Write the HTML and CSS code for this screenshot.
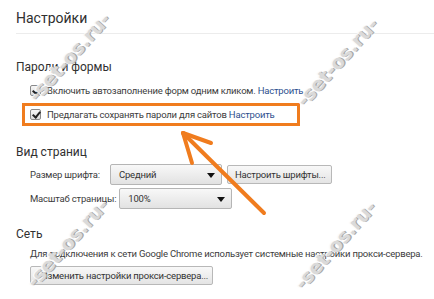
FILE: index.html
```html
<!DOCTYPE html>
<html lang="ru">
<head>
  <meta charset="UTF-8" />
  <title>Настройки</title>
  <link rel="stylesheet" href="styles.css">
</head>
<body>
  <div class="page">
    <header class="page-header">
      <h1>Настройки</h1>
    </header>

    <section class="group">
      <h2>Пароли и формы</h2>
      <label class="check-row">
        <span class="checkbox checked"></span>
        <span>Включить автозаполнение форм одним кликом. <a class="link" href="#">Настроить</a></span>
      </label>
      <label class="check-row highlight">
        <span class="checkbox checked"></span>
        <span>Предлагать сохранять пароли для сайтов <a class="link" href="#">Настроить</a></span>
      </label>
    </section>

    <section class="group">
      <h2>Вид страниц</h2>
      <div class="field-row">
        <span class="field-label label-font">Размер шрифта:</span>
        <div class="select select-font">Средний<span class="caret"></span></div>
        <button class="btn btn-fonts">Настроить шрифты...</button>
      </div>
      <div class="field-row">
        <span class="field-label">Масштаб страницы:</span>
        <div class="select select-zoom">100%<span class="caret"></span></div>
      </div>
    </section>

    <section class="group">
      <h2>Сеть</h2>
      <p class="desc">Для подключения к сети Google Chrome использует системные настройки прокси-сервера.</p>
      <button class="btn btn-proxy">Изменить настройки прокси-сервера...</button>
    </section>
  </div>

  <!-- стрелка поверх скриншота -->
  <svg class="arrow" width="434" height="299" viewBox="0 0 434 299">
    <g stroke="#f07c1e" stroke-width="4" stroke-linecap="round" fill="none">
      <line x1="264" y1="213" x2="183" y2="133" />
      <line x1="183" y1="133" x2="211" y2="143" />
      <line x1="183" y1="133" x2="192" y2="163" />
    </g>
  </svg>

  <div class="watermark wm1">-set-os.ru-</div>
  <div class="watermark wm2">-set-os.ru-</div>
  <div class="watermark wm3">-set-os.ru-</div>
  <div class="watermark wm4">-set-os.ru-</div>
</body>
</html>
```

FILE: styles.css
```css
* {
  box-sizing: border-box;
}

body {
  margin: 0;
  background: #fff;
  font-family: Roboto, "Open Sans", Arial, sans-serif;
  font-size: 9.5px;
  letter-spacing: -0.2px;
  color: #3c3c3c;
  position: relative;
  width: 434px;
  height: 299px;
  overflow: hidden;
}

.page {
  padding: 8px 0 0 16px;
}

.page-header {
  border-bottom: 1px solid #ececec;
  padding-bottom: 5px;
}

.page-header h1 {
  margin: 0;
  font-size: 14px;
  line-height: 20px;
  font-weight: normal;
  letter-spacing: 0;
  color: #303030;
}

.group h2 {
  margin: 0;
  font-size: 12px;
  line-height: 18px;
  font-weight: normal;
  letter-spacing: 0;
  color: #303030;
}

.group:nth-of-type(1) {
  margin-top: 24px;
}

.group:nth-of-type(1) h2 {
  margin-bottom: 5px;
}

.group:nth-of-type(2) {
  margin-top: 17px;
}

.group:nth-of-type(3) {
  margin-top: 16px;
}

.check-row {
  display: flex;
  align-items: center;
  gap: 6px;
  height: 18px;
  margin-left: 14px;
  white-space: nowrap;
}

.check-row.highlight {
  width: fit-content;
  height: 23px;
  margin-top: 4px;
  margin-left: 6px;
  padding: 0 22px 0 5px;
  border: 3px solid #f07c1e;
}

.checkbox {
  width: 11px;
  height: 11px;
  border: 1px solid #8a8a8a;
  border-radius: 2px;
  background: linear-gradient(#f6f6f6, #dcdcdc);
  position: relative;
  flex-shrink: 0;
}

.checkbox.checked::after {
  content: "";
  position: absolute;
  left: 3px;
  top: 0px;
  width: 3px;
  height: 6px;
  border: solid #222;
  border-width: 0 2px 2px 0;
  transform: rotate(40deg);
}

.link {
  color: #2d4f8e;
  text-decoration: none;
}

.field-row {
  display: flex;
  align-items: center;
  gap: 3px;
  margin-left: 14px;
  margin-top: 2px;
  height: 22px;
}

.field-label {
  white-space: nowrap;
}

.label-font {
  min-width: 77px;
}

.select {
  position: relative;
  height: 21px;
  line-height: 19px;
  padding-left: 8px;
  border: 1px solid #b5b5b5;
  border-radius: 2px;
  background: linear-gradient(#f8f8f8, #e2e2e2);
  color: #333;
}

.select-font {
  width: 112px;
}

.select-zoom {
  width: 113px;
}

.caret {
  position: absolute;
  right: 6px;
  top: 8px;
  border-left: 4px solid transparent;
  border-right: 4px solid transparent;
  border-top: 5px solid #111;
}

.btn {
  height: 19px;
  padding: 0 7px;
  font-family: inherit;
  font-size: 9.5px;
  letter-spacing: -0.2px;
  color: #333;
  border: 1px solid #b8b8b8;
  border-radius: 2px;
  background: linear-gradient(#f8f8f8, #e4e4e4);
  white-space: nowrap;
}

.btn-fonts {
  width: 105px;
  margin-left: 2px;
}

.desc {
  margin: 2px 0 0 14px;
  line-height: 18px;
  white-space: nowrap;
}

.btn-proxy {
  margin: 3px 0 0 14px;
  width: 183px;
  text-align: left;
  padding-left: 10px;
}

.arrow {
  position: absolute;
  left: 0;
  top: 0;
}

.watermark {
  position: absolute;
  font-family: "DejaVu Sans", sans-serif;
  font-weight: bold;
  font-size: 19px;
  letter-spacing: 0;
  color: #dadada;
  text-shadow: 1px 1px 0 #a8a8a8, -1px -1px 0 #fafafa;
  white-space: nowrap;
  transform: translate(-50%, -50%) rotate(-48deg);
}

.wm1 { left: 69px; top: 57px; }
.wm2 { left: 67px; top: 243px; }
.wm3 { left: 337px; top: 62px; }
.wm4 { left: 335px; top: 245px; }
```
